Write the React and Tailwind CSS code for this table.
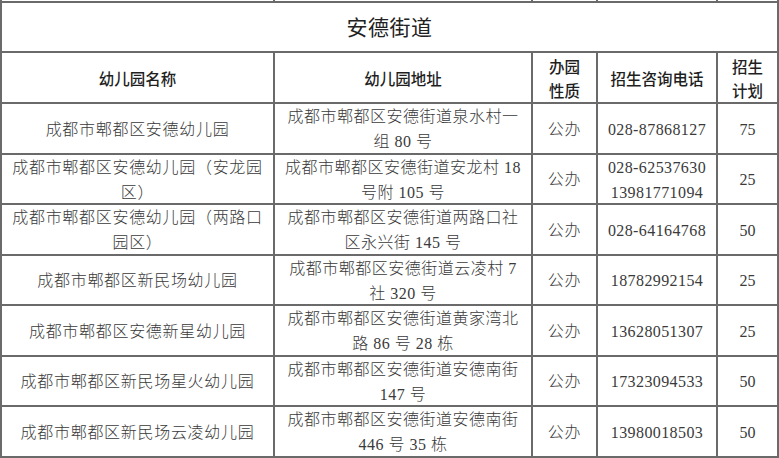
import React from 'react';

const rows = [
  { name: ['成都市郫都区安德幼儿园'], addr: ['成都市郫都区安德街道泉水村一', '组 80 号'], tel: ['028-87868127'], plan: '75' },
  { name: ['成都市郫都区安德幼儿园（安龙园', '区）'], addr: ['成都市郫都区安德街道安龙村 18', '号附 105 号'], tel: ['028-62537630', '13981771094'], plan: '25' },
  { name: ['成都市郫都区安德幼儿园（两路口', '园区）'], addr: ['成都市郫都区安德街道两路口社', '区永兴街 145 号'], tel: ['028-64164768'], plan: '50' },
  { name: ['成都市郫都区新民场幼儿园'], addr: ['成都市郫都区安德街道云凌村 7', '社 320 号'], tel: ['18782992154'], plan: '25' },
  { name: ['成都市郫都区安德新星幼儿园'], addr: ['成都市郫都区安德街道黄家湾北', '路 86 号 28 栋'], tel: ['13628051307'], plan: '25' },
  { name: ['成都市郫都区新民场星火幼儿园'], addr: ['成都市郫都区安德街道安德南街', '147 号'], tel: ['17323094533'], plan: '50' },
  { name: ['成都市郫都区新民场云凌幼儿园'], addr: ['成都市郫都区安德街道安德南街', '446 号 35 栋'], tel: ['13980018503'], plan: '50' },
];

const grid = 'grid grid-cols-[273px_258px_65px_120px_1fr]';
const cell = 'flex flex-col items-center justify-center text-center border-r-2 border-[#6a6a6a] last:border-r-0';

const Lines = ({ lines }) => lines.map((l, i) => <div key={i} className="whitespace-nowrap">{l}</div>);

export default function App() {
  return (
    <div className="w-[779px] h-[458px] bg-white overflow-hidden">
      <div className="w-[779px] border-l-2 border-r-2 border-[#6a6a6a]">
        {/* cut-off row above */}
        <div className={`${grid} h-[3px] border-b-2 border-[#6a6a6a]`}>
          <div className={cell} />
          <div className={cell} />
          <div className={cell} />
          <div className={cell} />
          <div className={cell} />
        </div>

        <div className="h-[50px] border-b-2 border-[#6a6a6a] flex items-center justify-center text-[21px] text-[#222] font-['Noto_Sans_CJK_SC',sans-serif] tracking-[0.5px]">
          安德街道
        </div>

        <div className={`${grid} h-[51px] border-b-2 border-[#6a6a6a] text-[15.5px] leading-[24px] text-[#1f1f1f] font-['Noto_Sans_CJK_SC',sans-serif] font-medium`}>
          <div className={cell}>幼儿园名称</div>
          <div className={cell}>幼儿园地址</div>
          <div className={cell}><div>办园</div><div>性质</div></div>
          <div className={cell}>招生咨询电话</div>
          <div className={cell}><div>招生</div><div>计划</div></div>
        </div>

        {rows.map((r, i) => (
          <div
            key={i}
            className={`${grid} h-[50.5px] border-b-2 border-[#6a6a6a] text-[16px] leading-[25px] text-[#3a3a3a] font-['Liberation_Serif','Noto_Sans_CJK_SC',serif] font-light`}
          >
            <div className={`${cell} tracking-[0.7px]`}><Lines lines={r.name} /></div>
            <div className={`${cell} tracking-[0.5px]`}><Lines lines={r.addr} /></div>
            <div className={`${cell} tracking-[0.7px]`}>公办</div>
            <div className={`${cell} tracking-[0.4px]`}><Lines lines={r.tel} /></div>
            <div className={cell}>{r.plan}</div>
          </div>
        ))}
      </div>
    </div>
  );
}
